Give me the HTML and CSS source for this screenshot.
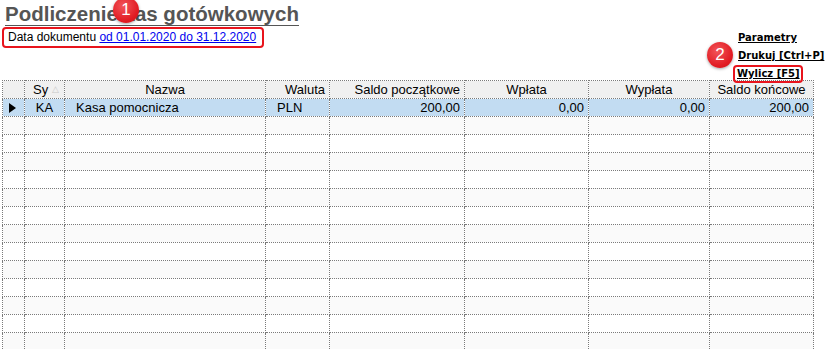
FILE: index.html
```html
<!DOCTYPE html>
<html lang="pl">
<head>
  <meta charset="UTF-8">
  <title>Podliczenie kas gotówkowych</title>
  <link rel="stylesheet" href="styles.css">
</head>
<body>
  <div class="top">
    <div class="heading">
      <h1 class="title">Podliczenie kas gotówkowych</h1>
      <div class="filter marked">Data dokumentu <a href="#">od 01.01.2020 do 31.12.2020</a></div>
      <span class="badge badge-1">1</span>
    </div>
    <div class="actions">
      <a href="#">Parametry</a>
      <a href="#">Drukuj [Ctrl+P]</a>
      <a href="#" class="marked">Wylicz [F5]</a>
      <span class="badge badge-2">2</span>
    </div>
  </div>
  <table class="grid">
    <colgroup>
      <col style="width:22px">
      <col style="width:40px">
      <col style="width:201px">
      <col style="width:64px">
      <col style="width:135px">
      <col style="width:124px">
      <col style="width:121px">
      <col style="width:104px">
    </colgroup>
    <thead>
      <tr>
        <th></th>
        <th class="sort">Sy <span class="arrow">&#9651;</span></th>
        <th>Nazwa</th>
        <th class="right">Waluta</th>
        <th class="right">Saldo początkowe</th>
        <th>Wpłata</th>
        <th>Wypłata</th>
        <th>Saldo końcowe</th>
      </tr>
    </thead>
    <tbody>
      <tr class="selected">
        <td class="pointer"><span class="tri"></span></td>
        <td class="center">KA</td>
        <td class="name">Kasa pomocnicza</td>
        <td class="cur">PLN</td>
        <td class="num">200,00</td>
        <td class="num">0,00</td>
        <td class="num">0,00</td>
        <td class="num">200,00</td>
      </tr>
      <tr class="odd"><td></td><td></td><td></td><td></td><td></td><td></td><td></td><td></td></tr>
      <tr><td></td><td></td><td></td><td></td><td></td><td></td><td></td><td></td></tr>
      <tr class="odd"><td></td><td></td><td></td><td></td><td></td><td></td><td></td><td></td></tr>
      <tr><td></td><td></td><td></td><td></td><td></td><td></td><td></td><td></td></tr>
      <tr class="odd"><td></td><td></td><td></td><td></td><td></td><td></td><td></td><td></td></tr>
      <tr><td></td><td></td><td></td><td></td><td></td><td></td><td></td><td></td></tr>
      <tr class="odd"><td></td><td></td><td></td><td></td><td></td><td></td><td></td><td></td></tr>
      <tr><td></td><td></td><td></td><td></td><td></td><td></td><td></td><td></td></tr>
      <tr class="odd"><td></td><td></td><td></td><td></td><td></td><td></td><td></td><td></td></tr>
      <tr><td></td><td></td><td></td><td></td><td></td><td></td><td></td><td></td></tr>
      <tr class="odd"><td></td><td></td><td></td><td></td><td></td><td></td><td></td><td></td></tr>
      <tr><td></td><td></td><td></td><td></td><td></td><td></td><td></td><td></td></tr>
      <tr class="odd"><td></td><td></td><td></td><td></td><td></td><td></td><td></td><td></td></tr>
    </tbody>
  </table>
</body>
</html>
```

FILE: styles.css
```css
body {
  margin: 0;
  padding: 0;
  background-color: #fff;
  font-family: "Liberation Sans", Arial, sans-serif;
  font-size: 12px;
  color: #000;
  overflow: hidden;
}

.top {
  display: flex;
  justify-content: space-between;
  height: 80px;
}

.heading {
  position: relative;
  padding-left: 2px;
}

.title {
  display: inline-block;
  margin: 3px 0 0 3px;
  font-size: 20.5px;
  line-height: 22px;
  font-weight: bold;
  color: #555;
  border-bottom: 1px solid #555;
}

.filter {
  width: 254px;
  height: 17px;
  line-height: 17px;
  padding-left: 4px;
  margin-top: 1px;
}

.filter a {
  color: #0000ee;
}

.marked {
  border: 2px solid #e8141c;
  border-radius: 4px;
}

.actions {
  position: relative;
  display: flex;
  flex-direction: column;
  align-items: flex-start;
  padding: 29px 0 0 0;
  width: 90px;
}

.actions a {
  font-family: "DejaVu Sans", Verdana, sans-serif;
  font-size: 10px;
  font-weight: bold;
  color: #000;
  line-height: 18px;
  white-space: nowrap;
}

.actions a.marked {
  line-height: 14px;
  padding: 0 1px 0 2px;
  margin: 0 0 0 -5px;
}

.badge {
  position: absolute;
  width: 26px;
  height: 26px;
  border-radius: 50%;
  background: radial-gradient(circle at 40% 35%, #f2555a, #e11b22 65%, #c9141a);
  box-shadow: 0 1px 3px rgba(0, 0, 0, 0.35);
  color: #fff;
  font-family: "Liberation Sans", Arial, sans-serif;
  font-size: 17px;
  line-height: 26px;
  text-align: center;
}

.badge-1 {
  left: 113px;
  top: -3px;
}

.badge-2 {
  left: -31px;
  top: 42px;
}

.grid {
  margin-left: 2px;
  border-collapse: collapse;
  table-layout: fixed;
  width: 811px;
}

.grid th,
.grid td {
  height: 17px;
  padding: 0 4px;
  border: 1px dotted #7a7a7a;
  font-size: 13px;
  font-weight: normal;
  white-space: nowrap;
  overflow: hidden;
}

.grid th {
  background-color: #f0f0f0;
  text-align: center;
}

.grid th.right {
  text-align: right;
}

.grid th.sort {
  text-align: left;
  padding-left: 8px;
}

.arrow {
  font-size: 9px;
  color: #c8c8c8;
  vertical-align: 2px;
}

.grid tr.odd td {
  background-color: #fafafa;
}

.grid tr.selected td {
  background-color: #c2dcf2;
}

.grid td.pointer {
  padding-left: 6px;
}

.tri {
  display: block;
  width: 0;
  height: 0;
  border-left: 7px solid #000;
  border-top: 5px solid transparent;
  border-bottom: 5px solid transparent;
}

.grid td.center {
  text-align: center;
}

.grid td.name {
  padding-left: 11px;
}

.grid td.cur {
  padding-left: 11px;
}

.grid td.num {
  text-align: right;
}
```
